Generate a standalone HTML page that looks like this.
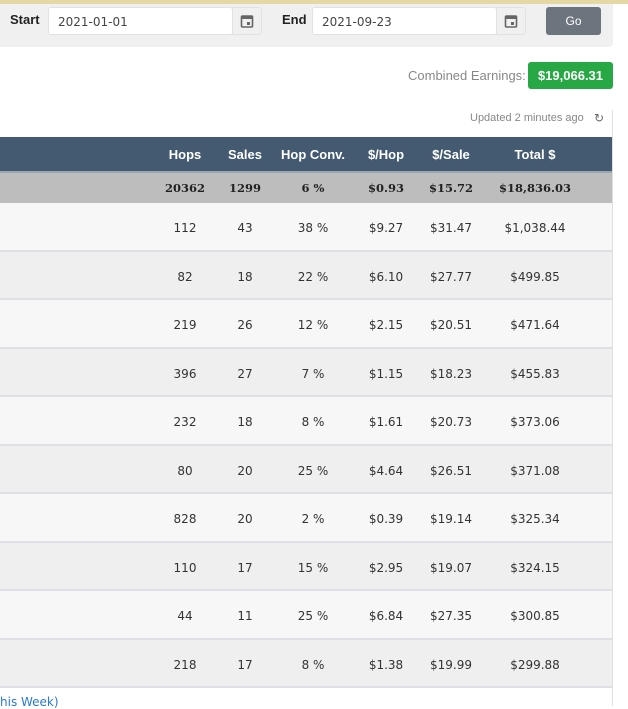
<!DOCTYPE html>
<html><head><meta charset="utf-8"><style>
*{margin:0;padding:0;box-sizing:border-box}
body{width:628px;height:706px;overflow:hidden;background:#fff;font-family:"DejaVu Sans","Liberation Sans",sans-serif;position:relative;color:#333}
.abs{position:absolute}
.band{left:0;top:0;width:628px;height:4px;background:#e6d8a4}
.panel{left:0;top:4px;width:613px;height:43px;background:#f0f0f0;border-radius:0 0 4px 0}
.lbl{font-size:13px;font-weight:bold;color:#222;font-family:"Liberation Sans",sans-serif}
.inp{height:28px;background:#fff;border:1px solid #e2e2e2;border-radius:3px;font-size:12px;padding:7px 9px;color:#444}
.cal{width:30px;height:28px;background:#f0f0f0;border:1px solid #e2e2e2;border-radius:0 3px 3px 0}
.go{left:546px;top:7px;width:55px;height:28px;background:#6c757d;border-radius:3px;color:#fff;font-size:12px;text-align:center;line-height:28px;font-family:"Liberation Sans",sans-serif}
.tbl{left:0;top:137px;width:613px;border-right:1px solid #e0e0e0}
.row{position:absolute;left:0;width:612px;font-size:12px}
.row span{position:absolute;transform:translateX(-50%);white-space:nowrap}
.hd{background:#435a70;color:#fff;font-weight:bold;font-family:"Liberation Sans",sans-serif;font-size:13px}
.sm{background:#bdbdbd;font-weight:bold;font-family:"DejaVu Serif",serif;font-size:11.5px;color:#222}
</style></head><body>
<div class="abs band"></div>
<div class="abs panel"></div>
<div class="abs lbl" style="left:10px;top:12px">Start</div>
<div class="abs inp" style="left:48px;top:7px;width:185px">2021-01-01</div>
<div class="abs cal" style="left:232px;top:7px"></div>
<svg class="abs" style="left:240px;top:14px" width="14" height="14" viewBox="0 0 14 14"><rect x="1.5" y="2" width="11" height="11" rx="1" fill="none" stroke="#666" stroke-width="1.6"/><rect x="1.5" y="2" width="11" height="3" fill="#666"/><rect x="7" y="8" width="3" height="3" fill="#666"/></svg>
<div class="abs lbl" style="left:282px;top:12px">End</div>
<div class="abs inp" style="left:312px;top:7px;width:185px">2021-09-23</div>
<div class="abs cal" style="left:496px;top:7px"></div>
<svg class="abs" style="left:504px;top:14px" width="14" height="14" viewBox="0 0 14 14"><rect x="1.5" y="2" width="11" height="11" rx="1" fill="none" stroke="#666" stroke-width="1.6"/><rect x="1.5" y="2" width="11" height="3" fill="#666"/><rect x="7" y="8" width="3" height="3" fill="#666"/></svg>
<div class="abs go">Go</div>
<div class="abs" style="left:408px;top:68px;font-size:13px;color:#888;font-family:'Liberation Sans',sans-serif">Combined Earnings:</div>
<div class="abs" style="left:528px;top:62px;width:85px;height:27px;background:#28a745;border-radius:3px;color:#fff;font-weight:bold;font-size:13px;text-align:center;line-height:27px;font-family:'Liberation Sans',sans-serif">$19,066.31</div>
<div class="abs" style="left:470px;top:112px;font-size:11px;color:#888;font-family:'Liberation Sans',sans-serif">Updated 2 minutes ago</div>
<div class="abs" style="left:594px;top:111px;font-size:12px;color:#666">&#x21bb;</div>
<div class="abs" style="left:612px;top:110px;width:1px;height:596px;background:#e0e0e0"></div>
<div class="abs tbl">
<div class="row hd" style="top:0;height:34px"><span style="left:185px;top:10px">Hops</span><span style="left:245px;top:10px">Sales</span><span style="left:313px;top:10px">Hop Conv.</span><span style="left:386px;top:10px">$/Hop</span><span style="left:451px;top:10px">$/Sale</span><span style="left:535px;top:10px">Total $</span></div>
<div class="row sm" style="top:34px;height:32px;border-top:2px solid #9aa7b3"><span style="left:185px;top:8px">20362</span><span style="left:245px;top:8px">1299</span><span style="left:313px;top:8px">6 %</span><span style="left:386px;top:8px">$0.93</span><span style="left:451px;top:8px">$15.72</span><span style="left:535px;top:8px">$18,836.03</span></div>
</div>
<div id="rows"></div>
<script>
var d=[["112","43","38 %","$9.27","$31.47","$1,038.44"],["82","18","22 %","$6.10","$27.77","$499.85"],["219","26","12 %","$2.15","$20.51","$471.64"],["396","27","7 %","$1.15","$18.23","$455.83"],["232","18","8 %","$1.61","$20.73","$373.06"],["80","20","25 %","$4.64","$26.51","$371.08"],["828","20","2 %","$0.39","$19.14","$325.34"],["110","17","15 %","$2.95","$19.07","$324.15"],["44","11","25 %","$6.84","$27.35","$300.85"],["218","17","8 %","$1.38","$19.99","$299.88"]];
var x=[185,245,313,386,451,535],h="";
d.forEach(function(r,i){var t=203+i*48.5;h+='<div class="row" style="top:'+t+'px;height:48.5px;background:'+(i%2?'#efefef':'#f7f7f7')+';border-bottom:2px solid #dde0e4">';r.forEach(function(v,j){h+='<span style="left:'+x[j]+'px;top:18px">'+v+'</span>'});h+='</div>'});
document.getElementById('rows').innerHTML=h;
</script>
<div class="abs" style="left:0;top:695px;font-size:12px;color:#2a7ad0">his Week)</div>
</body></html>
